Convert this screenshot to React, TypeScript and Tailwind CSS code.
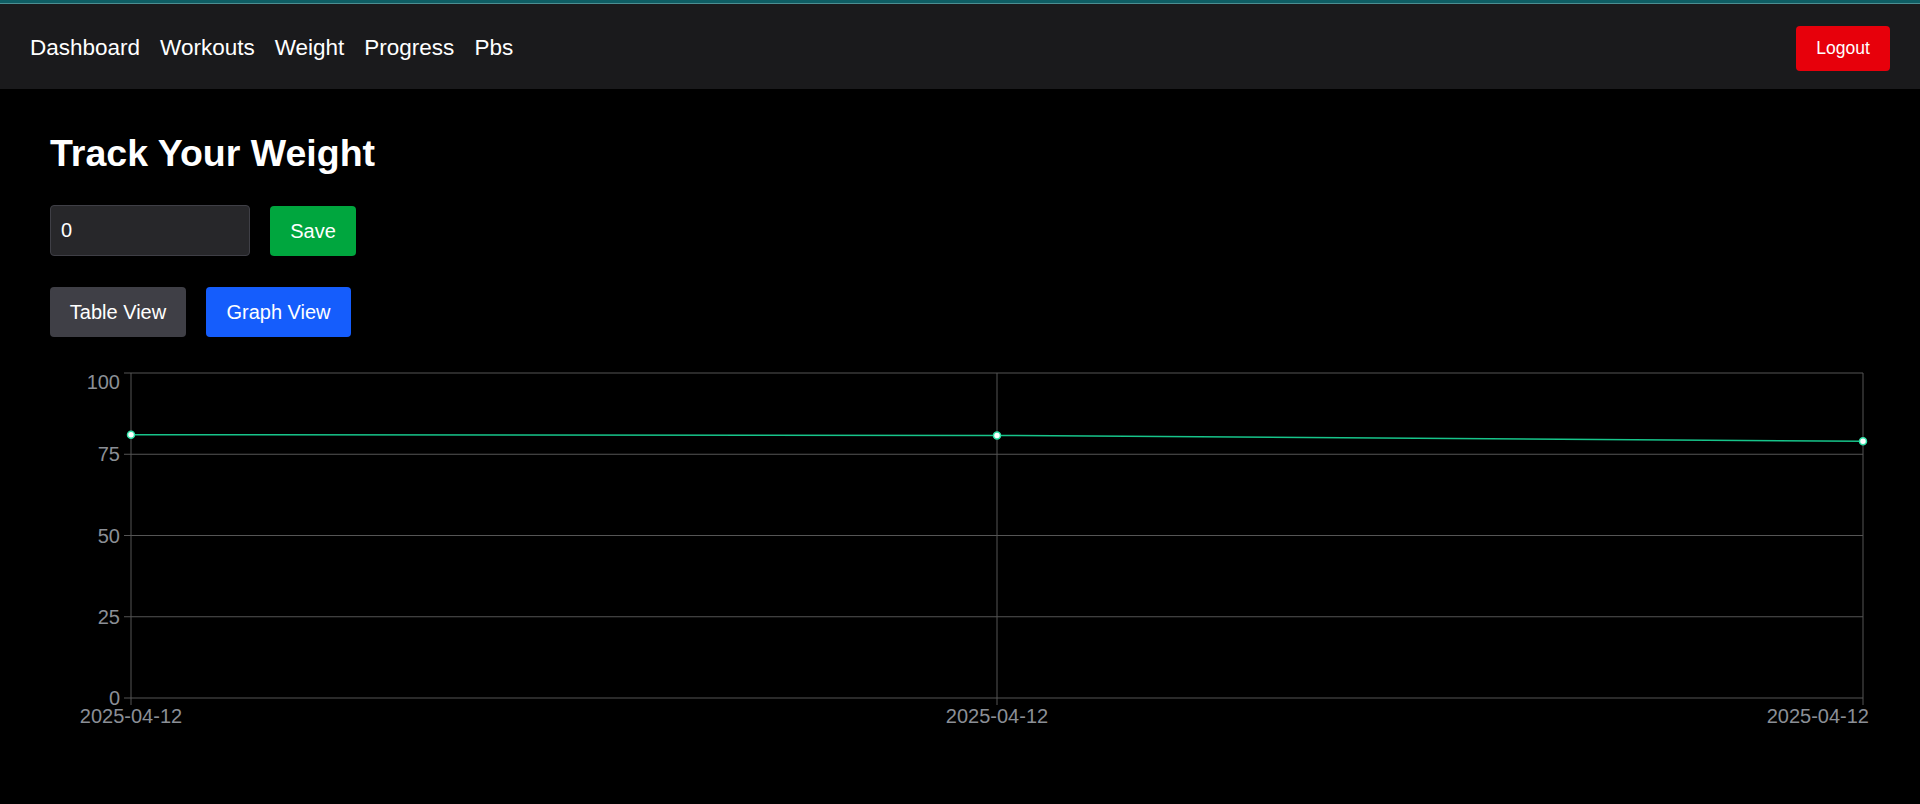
import * as React from "react"

const font = { fontFamily: '"Liberation Sans", Arial, sans-serif' }

const points = [
  { label: "2025-04-12", value: 81 },
  { label: "2025-04-12", value: 80.8 },
  { label: "2025-04-12", value: 79 },
]

const WeightChart = () => {
  const left = 81
  const right = 1813
  const top = 5
  const bottom = 330
  const y = (v: number) => bottom - (v / 100) * (bottom - top)
  const x = (i: number) => left + ((right - left) / (points.length - 1)) * i
  const ticks = [100, 75, 50, 25, 0]
  const grid = "#555555"
  const text = "#8b8f96"

  return (
    <svg width="1820" height="360" className="block" style={font}>
      {ticks.map((t) => (
        <line key={t} x1={left - 7} x2={right} y1={y(t)} y2={y(t)} stroke={grid} strokeWidth="1" />
      ))}
      {points.map((_, i) => (
        <line key={i} x1={x(i)} x2={x(i)} y1={top} y2={bottom + 7} stroke={grid} strokeWidth="1" />
      ))}
      {ticks.map((t) => (
        <text key={t} x={left - 11} y={t === 100 ? 21 : y(t) + 7} fill={text} fontSize="20" textAnchor="end">
          {t}
        </text>
      ))}
      {points.map((p, i) => (
        <text
          key={i}
          x={i === points.length - 1 ? 1819 : x(i)}
          y={355}
          fill={text}
          fontSize="20"
          textAnchor={i === points.length - 1 ? "end" : "middle"}
        >
          {p.label}
        </text>
      ))}
      <polyline
        points={points.map((p, i) => `${x(i)},${y(p.value)}`).join(" ")}
        fill="none"
        stroke="#17c48a"
        strokeWidth="1.5"
      />
      {points.map((p, i) => (
        <circle key={i} cx={x(i)} cy={y(p.value)} r="3.5" fill="#ffffff" stroke="#2fe3a8" strokeWidth="1.5" />
      ))}
    </svg>
  )
}

export default function App() {
  const links = ["Dashboard", "Workouts", "Weight", "Progress", "Pbs"]
  return (
    <div className="min-h-[804px] bg-black text-white" style={font}>
      <div className="h-[3px] bg-[#0f5e64]" />
      <div className="h-[1px] bg-[#4b8e92]" />
      <nav className="flex h-[85px] items-center justify-between bg-[#1a1a1c] pl-[30px] pr-[30px] pt-[3px]">
        <div className="flex items-center gap-[20px]">
          {links.map((l) => (
            <a key={l} className="text-[22.5px] leading-none text-white">
              {l}
            </a>
          ))}
        </div>
        <button className="h-[45px] w-[94px] rounded-[4px] bg-[#e7000b] text-[17.5px] text-white">
          Logout
        </button>
      </nav>
      <main className="px-[50px] pt-[44px]">
        <h1 className="text-[37.5px] font-bold leading-[40px]">Track Your Weight</h1>
        <div className="mt-[32px] flex items-center gap-5">
          <input
            defaultValue="0"
            className="h-[51px] w-[200px] rounded-[4px] border border-[#3f3f46] bg-[#27272a] px-[10px] text-[20px] text-white outline-none"
          />
          <button className="h-[50px] w-[86px] rounded-[4px] bg-[#00a63e] text-[20px] text-white">
            Save
          </button>
        </div>
        <div className="mt-[31px] flex items-center gap-5">
          <button className="h-[50px] w-[136px] rounded-[4px] bg-[#3f3f46] text-[20px] text-white">
            Table View
          </button>
          <button className="h-[50px] w-[145px] rounded-[4px] bg-[#155dfc] text-[20px] text-white">
            Graph View
          </button>
        </div>
        <div className="mt-[31px]">
          <WeightChart />
        </div>
      </main>
    </div>
  )
}
